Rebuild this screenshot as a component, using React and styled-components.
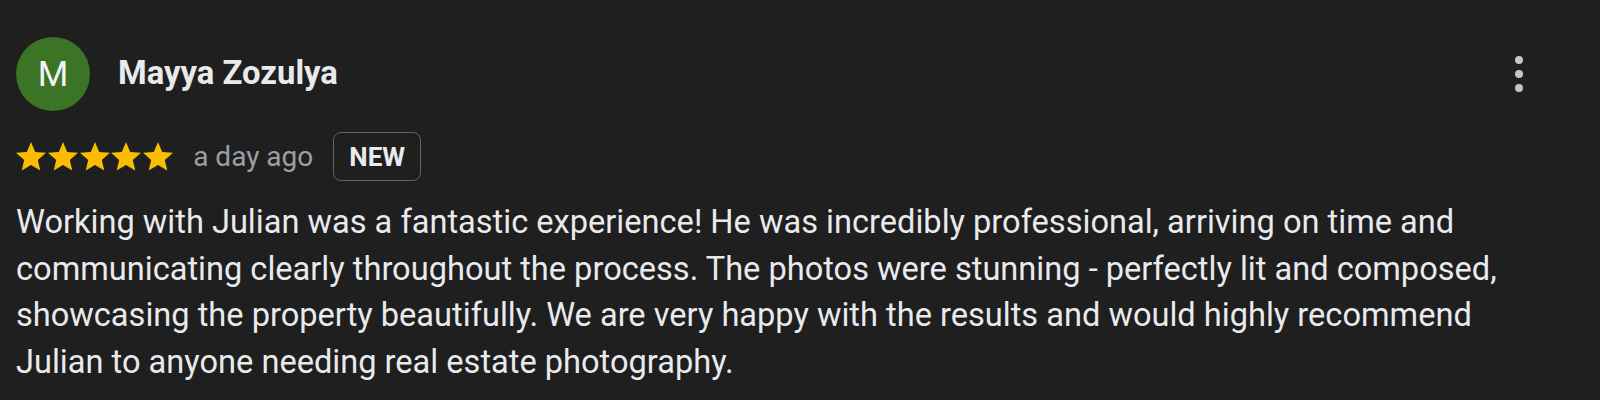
import React from "react";
import styled, { createGlobalStyle } from "styled-components";

const Global = createGlobalStyle`
  html, body { margin: 0; padding: 0; background: #1f1f1f; }
  body { font-family: Roboto, "Liberation Sans", Arial, sans-serif; }
`;

const Card = styled.div`
  width: 1600px;
  height: 400px;
  box-sizing: border-box;
  padding: 37px 0 0 16px;
  background: #1f1f1f;
  color: #e8eaed;
  overflow: hidden;
`;

const Header = styled.div`
  display: flex;
  align-items: center;
  height: 74px;
`;

const Avatar = styled.div`
  width: 74px;
  height: 74px;
  border-radius: 50%;
  background: #3a7424;
  color: #f1f3f4;
  display: flex;
  align-items: center;
  justify-content: center;
  font-size: 35px;
  font-weight: 400;
  flex-shrink: 0;
`;

const Name = styled.div`
  margin-left: 28px;
  margin-bottom: 3px;
  font-size: 32.8px;
  font-weight: 700;
  color: #e8eaed;
  flex: 1;
`;

const MoreButton = styled.button`
  background: none;
  border: 0;
  padding: 0;
  margin-right: 74px;
  width: 14px;
  height: 44px;
  display: flex;
  flex-direction: column;
  align-items: center;
  justify-content: center;
  gap: 6px;
  cursor: pointer;
`;

const Dot = styled.span`
  width: 8px;
  height: 8px;
  border-radius: 50%;
  background: #c4c7c5;
`;

const Meta = styled.div`
  display: flex;
  align-items: center;
  margin-top: 21px;
  height: 49px;
`;

const Stars = styled.div`
  display: flex;
  gap: 1.8px;
`;

const Date = styled.span`
  margin-left: 20px;
  font-size: 28px;
  color: #9aa0a6;
`;

const Badge = styled.span`
  margin-left: 20px;
  box-sizing: border-box;
  height: 49px;
  padding: 0 15px;
  display: flex;
  align-items: center;
  border: 1px solid #5f6368;
  border-radius: 8px;
  font-size: 26px;
  font-weight: 700;
  color: #e8eaed;
`;

const Body = styled.p`
  margin: 18px 0 0;
  width: 1530px;
  font-size: 32.6px;
  line-height: 46.5px;
  color: #e8eaed;
`;

const Star = () => (
  <svg width="30" height="28.5" viewBox="2 2 20 19" aria-hidden="true">
    <path
      fill="#fbbc04"
      d="M12 17.27L18.18 21l-1.64-7.03L22 9.24l-7.19-.61L12 2 9.19 8.63 2 9.24l5.46 4.73L5.82 21z"
    />
  </svg>
);

export default function App() {
  return (
    <>
      <Global />
      <Card>
        <Header>
          <Avatar>M</Avatar>
          <Name>Mayya Zozulya</Name>
          <MoreButton aria-label="More options">
            <Dot />
            <Dot />
            <Dot />
          </MoreButton>
        </Header>
        <Meta>
          <Stars>
            {[0, 1, 2, 3, 4].map((i) => (
              <Star key={i} />
            ))}
          </Stars>
          <Date>a day ago</Date>
          <Badge>NEW</Badge>
        </Meta>
        <Body>
          Working with Julian was a fantastic experience! He was incredibly
          professional, arriving on time and communicating clearly throughout
          the process. The photos were stunning - perfectly lit and composed,
          showcasing the property beautifully. We are very happy with the
          results and would highly recommend Julian to anyone needing real
          estate photography.
        </Body>
      </Card>
    </>
  );
}
